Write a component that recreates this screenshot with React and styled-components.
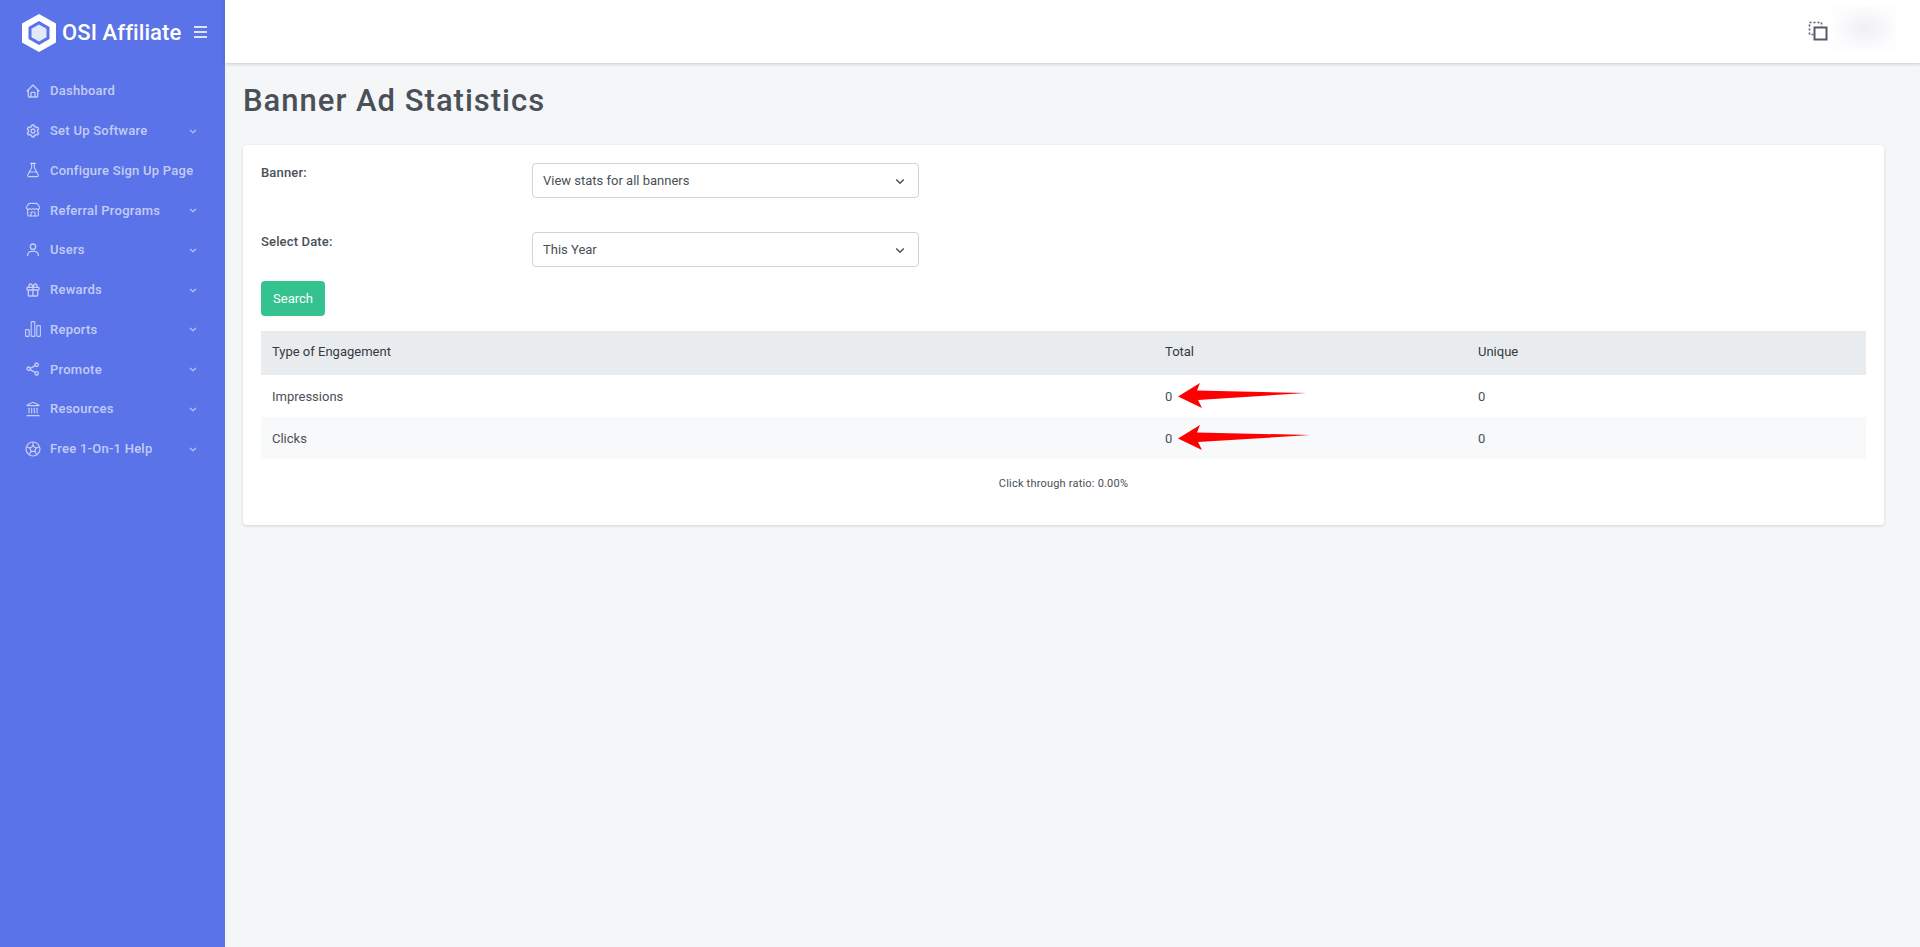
import React from "react"
import styled, { createGlobalStyle } from "styled-components"
import { BiHome, BiCog, BiUser, BiGift, BiShareAlt, BiChevronDown } from "react-icons/bi"
import { FlaskConical, Store, Landmark } from "lucide-react"

const ChartIcon = ({ size }) => (
  <svg width={size} height={size} viewBox="0 0 16 16" fill="none" stroke="currentColor" strokeWidth="1.1">
    <rect x="0.6" y="8.6" width="3.6" height="6.8" rx="0.6" />
    <rect x="6.2" y="0.6" width="3.6" height="14.8" rx="0.6" />
    <rect x="11.8" y="4.6" width="3.6" height="10.8" rx="0.6" />
  </svg>
)

const FootballIcon = ({ size }) => (
  <svg width={size} height={size} viewBox="0 0 16 16" fill="none" stroke="currentColor" strokeWidth="1.2">
    <circle cx="8" cy="8" r="7" />
    <path d="M8 5 L10.9 7.1 L9.8 10.4 H6.2 L5.1 7.1 Z" />
    <path d="M8 5 V1.5 M10.9 7.1 L14.4 6 M9.8 10.4 L11.8 13.5 M6.2 10.4 L4.2 13.5 M5.1 7.1 L1.6 6" />
  </svg>
)

const FlaskIcon = ({ size }) => <FlaskConical size={size} strokeWidth={1.7} />
const StoreIcon = ({ size }) => <Store size={size} strokeWidth={1.7} />
const BankIcon = ({ size }) => <Landmark size={size} strokeWidth={1.7} />

const menuItems = [
  { name: "Dashboard", icon: BiHome },
  { name: "Set Up Software", icon: BiCog, submenu: true },
  { name: "Configure Sign Up Page", icon: FlaskIcon },
  { name: "Referral Programs", icon: StoreIcon, submenu: true },
  { name: "Users", icon: BiUser, submenu: true },
  { name: "Rewards", icon: BiGift, submenu: true },
  { name: "Reports", icon: ChartIcon, submenu: true },
  { name: "Promote", icon: BiShareAlt, submenu: true },
  { name: "Resources", icon: BankIcon, submenu: true },
  { name: "Free 1-On-1 Help", icon: FootballIcon, submenu: true },
]

const Arrow = ({ length }) => (
  <ArrowSvg width={length + 2} height="26" viewBox={`0 0 ${length + 2} 26`}>
    <path
      d={`M0 13.5 L22 0 L19 7.5 L${length} 10 L20 17 L24 25 Z`}
      fill="#ff0000"
    />
  </ArrowSvg>
)

const Logo = () => (
  <svg width="34" height="38" viewBox="0 0 34 38">
    <path
      fillRule="evenodd"
      d="M17 0 L34 9.5 V28.5 L17 38 L0 28.5 V9.5 Z M17 7 L6.5 13 V25 L17 31 L27.5 25 V13 Z"
      fill="#fff"
    />
    <path d="M17 10.5 L24.5 14.8 V23.2 L17 27.5 L9.5 23.2 V14.8 Z" fill="#e4e8fb" />
  </svg>
)

const SelectIcon = () => (
  <SelectSvg width="20" height="20" viewBox="0 0 20 20" fill="none" stroke="#555b6d">
    <rect x="1.5" y="1.5" width="12" height="12" strokeWidth="1.6" strokeDasharray="2 2" />
    <rect x="6.5" y="6.5" width="12" height="12" fill="#fff" strokeWidth="2" />
  </SelectSvg>
)

const App = () => (
  <>
    <GlobalStyle />
    <Page>
      <Sidebar>
        <Brand>
          <Logo />
          <BrandName>OSI Affiliate</BrandName>
          <MenuToggle>
            <ToggleBar />
            <ToggleBar />
            <ToggleBar />
          </MenuToggle>
        </Brand>
        <MenuList>
          {menuItems.map(item => (
            <MenuItem key={item.name}>
              <MenuIcon>
                <item.icon size={16} />
              </MenuIcon>
              <MenuLabel>{item.name}</MenuLabel>
              {item.submenu ? <BiChevronDown size={14} /> : ""}
            </MenuItem>
          ))}
        </MenuList>
      </Sidebar>
      <Main>
        <Header>
          <SelectIcon />
          <BlurredAvatar />
        </Header>
        <Content>
          <Title>Banner Ad Statistics</Title>
          <Card>
            <FormRow>
              <FieldLabel>Banner:</FieldLabel>
              <SelectBox>
                View stats for all banners
                <SelectChevron size={18} />
              </SelectBox>
            </FormRow>
            <FormRow>
              <FieldLabel>Select Date:</FieldLabel>
              <SelectBox>
                This Year
                <SelectChevron size={18} />
              </SelectBox>
            </FormRow>
            <SearchButton>Search</SearchButton>
            <Table>
              <thead>
                <tr>
                  <HeadCell $width="893px">Type of Engagement</HeadCell>
                  <HeadCell $width="313px">Total</HeadCell>
                  <HeadCell>Unique</HeadCell>
                </tr>
              </thead>
              <tbody>
                <tr>
                  <Cell>Impressions</Cell>
                  <Cell>
                    0
                    <Arrow length={128} />
                  </Cell>
                  <Cell>0</Cell>
                </tr>
                <StripedRow>
                  <Cell>Clicks</Cell>
                  <Cell>
                    0
                    <Arrow length={132} />
                  </Cell>
                  <Cell>0</Cell>
                </StripedRow>
              </tbody>
            </Table>
            <Ratio>Click through ratio: 0.00%</Ratio>
          </Card>
        </Content>
      </Main>
    </Page>
  </>
)

const GlobalStyle = createGlobalStyle`
  html, body {
    margin: 0;
    padding: 0;
    height: 100%;
  }
  body {
    background: #f5f6f8;
    font-family: Roboto, "Liberation Sans", sans-serif;
    font-size: 13px;
    color: #495057;
  }
  * {
    box-sizing: border-box;
  }
`

const Page = styled.div`
  display: flex;
  min-height: 947px;
`

const Sidebar = styled.aside`
  flex: 0 0 225px;
  background: #5a73e8;
`

const Brand = styled.div`
  display: flex;
  align-items: center;
  height: 63px;
  padding: 2px 0 0 22px;
`

const BrandName = styled.span`
  margin-left: 6px;
  color: #fff;
  font-size: 22px;
  font-weight: 500;
  letter-spacing: 0.1px;
  white-space: nowrap;
`

const MenuToggle = styled.span`
  display: flex;
  flex-direction: column;
  gap: 3px;
  width: 13px;
  margin: -2px 0 0 13px;
`

const ToggleBar = styled.span`
  height: 2px;
  background: rgba(255, 255, 255, 0.8);
`

const MenuList = styled.ul`
  list-style: none;
  margin: 8px 0 0;
  padding: 0;
`

const MenuItem = styled.li`
  display: flex;
  align-items: center;
  height: 39.75px;
  padding: 0 25px 0 25px;
  color: rgba(255, 255, 255, 0.65);
  font-size: 13px;
  font-weight: 500;
  letter-spacing: 0.25px;
`

const MenuIcon = styled.span`
  display: flex;
  width: 25px;
`

const MenuLabel = styled.span`
  flex: 1;
  white-space: nowrap;
`

const Main = styled.div`
  flex: 1;
  min-width: 0;
`

const Header = styled.header`
  display: flex;
  align-items: center;
  justify-content: flex-end;
  gap: 5px;
  height: 63px;
  padding: 0 23px 8px 0;
  background: #fff;
  box-shadow: 0 1px 3px rgba(60, 64, 90, 0.25);
`

const SelectSvg = styled.svg`
  margin-top: 7px;
`

const BlurredAvatar = styled.div`
  width: 64px;
  height: 44px;
  background: radial-gradient(closest-side, #eff0f5, #fdfdfe);
`

const Content = styled.main`
  padding: 20px 36px 0 18px;
`

const Title = styled.h1`
  margin: 0 0 26px;
  color: #495057;
  font-size: 31px;
  font-weight: 500;
  letter-spacing: 1px;
  line-height: 36px;
`

const Card = styled.section`
  height: 380px;
  padding: 18px;
  background: #fff;
  border-radius: 4px;
  box-shadow: 0 1px 3px rgba(60, 64, 90, 0.2);
`

const FormRow = styled.div`
  display: flex;
  align-items: flex-start;
  height: 69px;
`

const FieldLabel = styled.label`
  flex: 0 0 271px;
  padding-top: 2px;
  font-weight: 500;
  letter-spacing: 0.15px;
  color: #495057;
`

const SelectBox = styled.div`
  display: flex;
  align-items: center;
  justify-content: space-between;
  width: 387px;
  height: 35px;
  padding: 0 9px 0 10px;
  border: 1px solid #ced4da;
  border-radius: 4px;
`

const SelectChevron = styled(BiChevronDown)`
  color: #495057;
`

const SearchButton = styled.button`
  display: block;
  width: 64px;
  height: 35px;
  margin-top: -20px;
  padding: 0;
  border: 0;
  border-radius: 4px;
  background: #34c38f;
  color: #fff;
  font: inherit;
`

const Table = styled.table`
  width: 100%;
  margin-top: 15px;
  border-collapse: collapse;
  table-layout: fixed;
`

const HeadCell = styled.th`
  width: ${props => props.$width || "auto"};
  height: 44px;
  padding: 0 11px 4px;
  background: #e9ecef;
  color: #343a40;
  font-weight: 400;
  text-align: left;
`

const Cell = styled.td`
  position: relative;
  height: 42px;
  padding: 0 11px;
`

const StripedRow = styled.tr`
  background: #f8f9fa;
`

const ArrowSvg = styled.svg`
  position: absolute;
  top: 8px;
  left: 24px;
`

const Ratio = styled.p`
  margin: 18px 0 0;
  color: #495057;
  font-size: 11px;
  letter-spacing: 0.2px;
  text-align: center;
`

export default App
